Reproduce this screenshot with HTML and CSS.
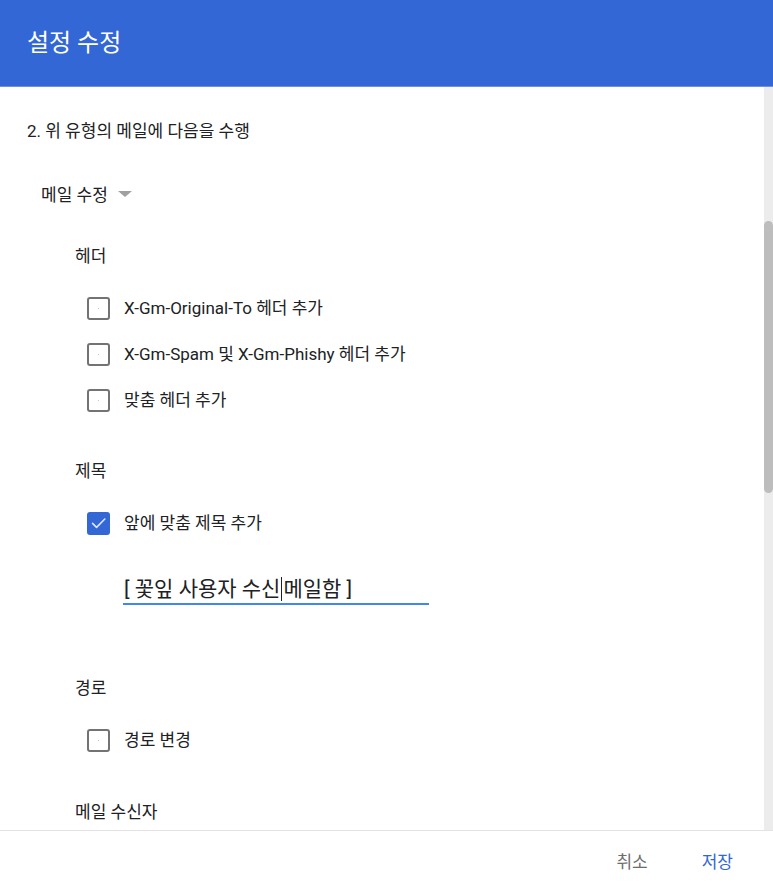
FILE: index.html
```html
<!DOCTYPE html>
<html lang="ko">
<head>
<meta charset="utf-8">
<title>설정 수정</title>
<link rel="stylesheet" href="styles.css">
</head>
<body>
<div class="dialog">
  <header class="topbar"><h1 class="title">설정 수정</h1></header>
  <div class="middle">
    <main class="content">
      <p class="step">2. 위 유형의 메일에 다음을 수행</p>
      <div class="dropdown">메일 수정 <span class="caret-down"></span></div>

      <div class="section-label">헤더</div>
      <label class="row"><span class="box"></span><span class="text">X-Gm-Original-To 헤더 추가</span></label>
      <label class="row"><span class="box"></span><span class="text">X-Gm-Spam 및 X-Gm-Phishy 헤더 추가</span></label>
      <label class="row"><span class="box"></span><span class="text">맞춤 헤더 추가</span></label>

      <div class="section-label">제목</div>
      <label class="row"><span class="box checked"><svg viewBox="0 0 24 24" width="22" height="22"><path d="M4.5 12.5l5 5L20 7" fill="none" stroke="#fff" stroke-width="2" stroke-linecap="round" stroke-linejoin="round" opacity="0.85"/></svg></span><span class="text">앞에 맞춤 제목 추가</span></label>
      <div class="field">[ 꽃잎 사용자 수신<span class="cursor"></span>메일함 ]</div>

      <div class="section-label route">경로</div>
      <label class="row"><span class="box"></span><span class="text">경로 변경</span></label>

      <div class="section-label recip">메일 수신자</div>
    </main>
    <div class="scrolltrack"><div class="thumb"></div></div>
  </div>
  <footer class="actions">
    <button class="btn cancel">취소</button>
    <button class="btn save">저장</button>
  </footer>
</div>
</body>
</html>
```
FILE: styles.css
```css
* { box-sizing: border-box; }
html, body { margin: 0; padding: 0; background: #fff; }
body {
  font-family: Roboto, "Noto Sans CJK KR", sans-serif;
  color: #202124;
}
.dialog {
  width: 773px;
  height: 893px;
  display: flex;
  flex-direction: column;
  overflow: hidden;
}
.topbar {
  height: 87px;
  flex: none;
  background: #3367d6;
  border-bottom: 1px solid #6b91e2;
  display: flex;
  align-items: center;
  padding-left: 27px;
}
.title {
  margin: 0;
  font-weight: 400;
  font-size: 24px;
  color: #fff;
  line-height: 30px;
}
.middle {
  flex: 1;
  display: flex;
  min-height: 0;
}
.content {
  flex: 1;
  overflow: hidden;
  padding-top: 33px;
  font-size: 17px;
}
.step {
  margin: 0 0 0 27px;
  line-height: 22px;
  font-size: 17px;
}
.dropdown {
  margin: 42px 0 0 41px;
  line-height: 22px;
  display: flex;
  align-items: center;
  gap: 10px;
}
.caret-down {
  width: 0; height: 0;
  border-left: 7px solid transparent;
  border-right: 7px solid transparent;
  border-top: 6px solid #a0a0a0;
  margin-top: -3px;
}
.section-label {
  margin: 39px 0 18px 75px;
  line-height: 22px;
}
.row + .section-label { margin-top: 37px; }
.section-label.route { margin-top: 72px; margin-bottom: 18px; }
.section-label.recip { margin-top: 38px; }
.row {
  display: flex;
  align-items: center;
  height: 46px;
  padding-left: 87px;
  gap: 14px;
}
.box {
  width: 23px;
  height: 23px;
  border: 2px solid #737373;
  border-radius: 3px;
  flex: none;
  display: flex;
  align-items: center;
  justify-content: center;
}
.box::after {
  content: "";
  width: 1px; height: 1px;
  background: #c8c8c8;
}
.box.checked {
  background: #3367d6;
  border-color: #3367d6;
}
.box.checked::after { display: none; }
.text { line-height: 22px; }
.field {
  margin: 29px 0 0 123px;
  width: 306px;
  font-size: 21px;
  line-height: 28px;
  padding-left: 1px;
  border-bottom: 2px solid #4285f4;
  color: #202124;
}
.cursor {
  display: inline-block;
  width: 1px;
  height: 24px;
  background: #202124;
  vertical-align: -5px;
  margin: 0 1px;
}
.scrolltrack {
  width: 9px;
  flex: none;
  background: #ececec;
  padding-top: 134px;
}
.thumb {
  height: 272px;
  background: #bdbdbd;
  border-radius: 5px;
}
.actions {
  height: 63px;
  flex: none;
  border-top: 1px solid #e3e3e3;
  display: flex;
  justify-content: flex-end;
  align-items: center;
  padding-right: 40px;
  gap: 54px;
}
.btn {
  border: none;
  background: none;
  padding: 0;
  font-family: Roboto, "Noto Sans CJK KR", sans-serif;
  font-size: 17px;
  line-height: 22px;
}
.btn.cancel { color: #6d6d6d; }
.btn.save { color: #3367d6; }
```
